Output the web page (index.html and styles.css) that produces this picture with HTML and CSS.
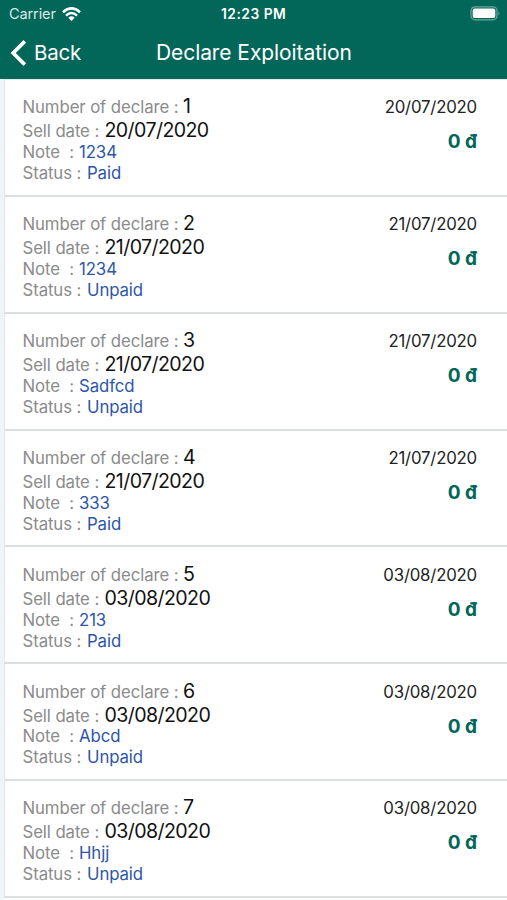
FILE: index.html
```
<!DOCTYPE html>
<html lang="en">
<head>
<meta charset="utf-8">
<title>Declare Exploitation</title>
<link rel="stylesheet" href="styles.css">
</head>
<body>
<header class="header">
  <div class="status-bar">
    <div class="carrier"><span>Carrier</span>
      <svg class="wifi" width="19" height="14" viewBox="0 0 19 14" fill="none" stroke="#fff" stroke-width="2.5"><path d="M1 5.200Q9.500-2.400 18 5.200M4 8.600Q9.500 3.400 15 8.600"/><path d="M6.300 10.700Q9.500 8 12.700 10.700L9.500 13.900Z" fill="#fff" stroke="none"/></svg>
    </div>
    <div class="clock">12:23 PM</div>
    <svg class="battery" width="31" height="15" viewBox="0 0 31 15"><rect x="1" y=".8" width="26" height="13" rx="4" fill="none" stroke="#6da79c" stroke-width="1.2"/><rect x="2.700" y="2.500" width="22.600" height="9.600" rx="2" fill="#fff"/><path d="M28.500 5.200Q30.500 7.300 28.500 9.400Z" fill="#6da79c"/></svg>
  </div>
  <nav class="nav">
    <div class="back"><svg width="17" height="26" viewBox="0 0 17 26" fill="none" stroke="#fff" stroke-width="3.700" stroke-linejoin="miter"><path d="M14.800 1.400 3.200 13 14.800 24.600"/></svg><span>Back</span></div>
    <h1 class="title">Declare Exploitation</h1>
  </nav>
</header>
<main class="list" id="list"></main>
<script src="script.js"></script>
</body>
</html>
```
FILE: styles.css
```
* { box-sizing: border-box; }
body { margin: 0; height: 900px; overflow: hidden; background: #fff; font-family: Inter, "Liberation Sans", sans-serif; }
.header { height: 79px; background: #026658; color: #fff; }
.status-bar { height: 27px; display: grid; grid-template-columns: 212px auto 1fr; align-items: center; padding: 0 6px 0 9px; font-size: 14px; }
.carrier { display: flex; align-items: center; gap: 6px; font-size: 14.500px; letter-spacing: -.1px; color: #d8ebe8; }
.clock { font-weight: 600; letter-spacing: .5px; font-size: 13.800px; }
.battery { justify-self: end; }
.nav { height: 51px; display: grid; grid-template-columns: 156px 1fr; align-items: center; }
.back { display: flex; align-items: center; padding-left: 10px; gap: 7px; font-size: 20.500px; letter-spacing: -.2px; }
.title { margin: 0; font-size: 21px; letter-spacing: -.08px; font-weight: 400; white-space: nowrap; }
.list { height: 821px; border-left: 4px solid #edf6f7; border-top: 1px solid #d7eeec; }
.row { height: 116.85px; padding: 15.400px 30px 0 17.500px; display: flex; justify-content: space-between; border-bottom: 2px solid #dcdfe0; border-left: 1px solid #e2e9ea; }
.row:first-child { padding-top: 15px; }
.line { display: flex; align-items: baseline; height: 21px; line-height: 21px; white-space: pre; }
.line.number { height: 24px; line-height: 23.500px; }
.line.sell { height: 22.800px; line-height: 22.500px; }
.label { color: #8b8b8b; font-size: 16.800px; letter-spacing: -.1px; }
.number .label { width: 160.500px; }
.sell .label { width: 82px; }
.note .label { width: 56.500px; }
.status .label { width: 64.500px; }
.value { color: #2d56a8; font-size: 16.800px; letter-spacing: -.1px; }
.number .value, .sell .value { color: #111; font-size: 19.600px; letter-spacing: -.6px; }
.side { text-align: right; }
.date { height: 24px; line-height: 24px; font-size: 16.800px; letter-spacing: -.2px; color: #222; }
.amount { margin-top: 10px; height: 26px; line-height: 26px; font-size: 19px; font-weight: 700; color: #026658; }
```
FILE: script.js
```
const declarations = [
  ["20/07/2020", "1234", "Paid"],
  ["21/07/2020", "1234", "Unpaid"],
  ["21/07/2020", "Sadfcd", "Unpaid"],
  ["21/07/2020", "333", "Paid"],
  ["03/08/2020", "213", "Paid"],
  ["03/08/2020", "Abcd", "Unpaid"],
  ["03/08/2020", "Hhjj", "Unpaid"]
];
const line = (name, label, value) =>
  `<div class="line ${name}"><span class="label">${label}</span><span class="value">${value}</span></div>`;
document.getElementById("list").innerHTML = declarations.map(([date, note, status], i) =>
  `<article class="row"><div>${line("number", "Number of declare :", i + 1)}${line("sell", "Sell date :", date)}${line("note", "Note  :", note)}${line("status", "Status :", status)}</div>
  <div class="side"><div class="date">${date}</div><div class="amount">0 đ</div></div></article>`).join("");
```
